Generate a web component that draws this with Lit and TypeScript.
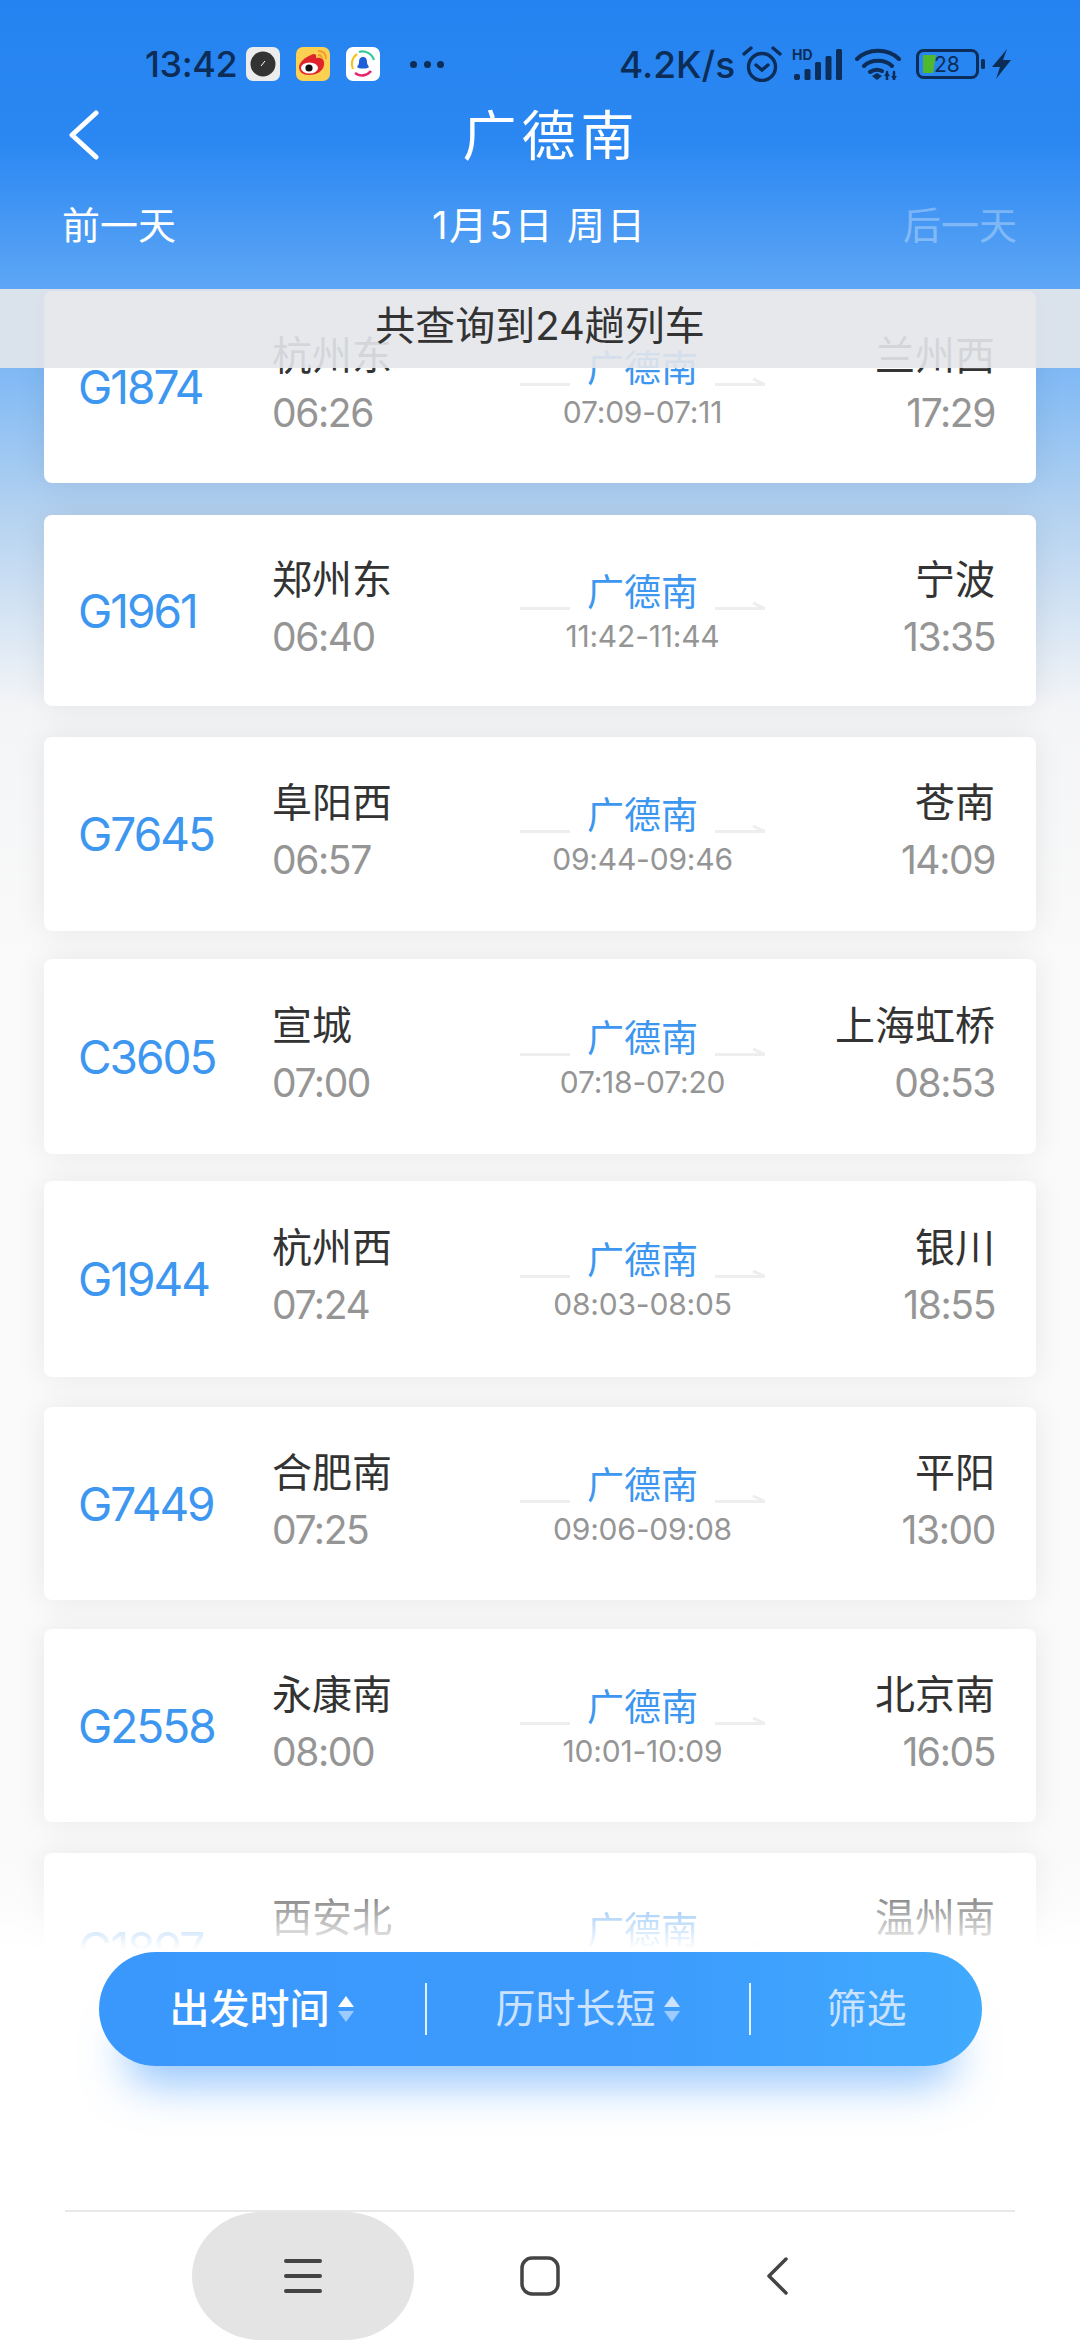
import { LitElement, html, css, svg } from 'lit';
import { customElement } from 'lit/decorators.js';

interface Train {
  no: string;
  from: string;
  dep: string;
  stop: string;
  to: string;
  arr: string;
  h: number;
  gap: number;
}

const TRAINS: Train[] = [
  { no: 'G1874', from: '杭州东', dep: '06:26', stop: '07:09-07:11', to: '兰州西', arr: '17:29', h: 192, gap: 32 },
  { no: 'G1961', from: '郑州东', dep: '06:40', stop: '11:42-11:44', to: '宁波', arr: '13:35', h: 191, gap: 31 },
  { no: 'G7645', from: '阜阳西', dep: '06:57', stop: '09:44-09:46', to: '苍南', arr: '14:09', h: 194, gap: 28 },
  { no: 'C3605', from: '宣城', dep: '07:00', stop: '07:18-07:20', to: '上海虹桥', arr: '08:53', h: 195, gap: 27 },
  { no: 'G1944', from: '杭州西', dep: '07:24', stop: '08:03-08:05', to: '银川', arr: '18:55', h: 196, gap: 30 },
  { no: 'G7449', from: '合肥南', dep: '07:25', stop: '09:06-09:08', to: '平阳', arr: '13:00', h: 193, gap: 29 },
  { no: 'G2558', from: '永康南', dep: '08:00', stop: '10:01-10:09', to: '北京南', arr: '16:05', h: 193, gap: 31 },
  { no: 'G1897', from: '西安北', dep: '08:12', stop: '12:20-12:22', to: '温州南', arr: '15:40', h: 192, gap: 0 },
];

const statusLeft = svg`
  <svg class="app" viewBox="0 0 34 34">
    <rect width="34" height="34" rx="7" fill="#ececec"/>
    <circle cx="17" cy="17" r="12.500" fill="#333"/>
    <path d="M15 19l4-5" stroke="#fff" stroke-width="1"/>
  </svg>
  <svg class="app" viewBox="0 0 34 34">
    <rect width="34" height="34" rx="7" fill="#fcd050"/>
    <path d="M15 8c3-2 6-1 5 3 5-1 9 1 8 7-1 7-9 10-15 10S3 25 3 20c0-4 6-10 12-12z" fill="#e0242b"/>
    <ellipse cx="13.500" cy="21" rx="8.500" ry="5.500" fill="#fff"/>
    <circle cx="13" cy="21" r="3.600" fill="#111"/>
    <path d="M22 4c5 0 8 3 8 8M22 8c2.500 0 4 1.500 4 4" fill="none" stroke="#f29a2e" stroke-width="1.800"/>
  </svg>
  <svg class="app" viewBox="0 0 34 34">
    <rect width="34" height="34" rx="7" fill="#fff"/>
    <path d="M7 22a12 12 0 0 1 4-15" fill="none" stroke="#f5c518" stroke-width="2.200"/>
    <path d="M13 5a12 12 0 0 1 15 8" fill="none" stroke="#35c79a" stroke-width="2.200"/>
    <path d="M9 26c5 4 12 3 16-2" fill="none" stroke="#e5266e" stroke-width="2.600"/>
    <path d="M17 10c3 0 4 2.500 4 5 0 2 1 3.500 2 5-2 2-10 2-12 0 1-1.500 2-3 2-5 0-2.500 1-5 4-5z" fill="#1e5fd8"/>
  </svg>
`;

const statusRight = svg`
  <svg class="alarm" viewBox="0 0 40 36" fill="none" stroke="#0c2d57" stroke-width="3.400" stroke-linecap="round">
    <circle cx="20" cy="21" r="13.500"/>
    <path d="M14 19l6 5 6-5M2 8l7-6M38 8l-7-6"/>
  </svg>
  <svg class="signal" viewBox="0 0 50 32" fill="#0c2d57">
    <text x="0" y="12" font-family="Inter, sans-serif" font-size="14" font-weight="700">HD</text>
    <rect x="2" y="26" width="6" height="6" rx="2"/>
    <rect x="12.500" y="21" width="6" height="11" rx="1.500"/>
    <rect x="23" y="14" width="6" height="18" rx="1.500"/>
    <rect x="33.500" y="8" width="6" height="24" rx="1.500"/>
    <rect x="44" y="1" width="6" height="31" rx="1.500"/>
  </svg>
  <svg class="wifi" viewBox="0 0 46 32" fill="none" stroke="#0c2d57" stroke-width="4" stroke-linecap="round">
    <path d="M2 11c11-11 31-11 42 0M9 18c7-7 21-7 28 0M15 24c3-2 8-3 12-1"/>
    <path d="M17 28l5-3 5 3-5 4z" fill="#0c2d57" stroke="none"/>
    <path d="M32 24v8M39 24v8" stroke-width="2.500"/>
    <path d="M29 28l3-4 3 4zM36 28l3 4 3-4z" fill="#0c2d57" stroke="none"/>
  </svg>
  <svg class="battery" viewBox="0 0 69 30">
    <rect x="1.500" y="1.500" width="60" height="27" rx="6" fill="none" stroke="#0c2d57" stroke-width="3"/>
    <path d="M7 6h13l-3 18H7z" fill="#4fb82e"/>
    <rect x="65" y="10" width="4" height="10" rx="1.500" fill="#0c2d57"/>
    <text x="18" y="23" font-family="Inter, sans-serif" font-size="21" fill="#0c2d57">28</text>
  </svg>
  <svg class="bolt" viewBox="0 0 19 30"><path d="M15 0L0 18h8l-4 12 15-19h-8z" fill="#0c2d57"/></svg>
`;

@customElement('app-root')
export class AppRoot extends LitElement {
  static styles = css`
    :host {
      display: block;
      position: relative;
      width: 1080px;
      height: 2340px;
      overflow: hidden;
      background: #fff;
      font-family: Inter, "Noto Sans CJK SC", sans-serif;
    }

    .page {
      display: flex;
      flex-direction: column;
      height: 100%;
    }

    /* header */
    .head {
      height: 289px;
      flex: none;
      box-sizing: border-box;
      background: linear-gradient(180deg, #2583f1 0%, #2b88f2 50%, #5ea6f5 100%);
      color: #fff;
    }

    .status {
      height: 34px;
      padding: 47px 0 0 145px;
      display: flex;
      align-items: center;
      color: #0c2d57;
    }

    .clock {
      font-size: 36px;
      font-weight: 500;
      width: 101px;
      letter-spacing: -0.4px;
    }

    .app {
      width: 34px;
      height: 34px;
      margin-right: 16px;
    }

    .dots {
      display: flex;
      gap: 6.5px;
      margin: 0 0 0 14px;
    }

    .dots i {
      width: 7px;
      height: 7px;
      border-radius: 50%;
      background: #0c2d57;
    }

    .speed {
      font-size: 37px;
      font-weight: 500;
      margin-left: 175px;
      width: 123px;
      white-space: nowrap;
    }

    .alarm { width: 40px; height: 36px; }
    .signal { width: 50px; height: 32px; margin-left: 10px; }
    .wifi { width: 46px; height: 32px; margin-left: 13px; }
    .battery { width: 69px; height: 30px; margin-left: 15px; }
    .bolt { width: 19px; height: 30px; margin-left: 7px; }

    .nav-row {
      position: relative;
      display: flex;
      justify-content: center;
      margin-top: 29px;
      height: 50px;
    }

    .back {
      position: absolute;
      left: 69px;
      top: 0;
      width: 30px;
      height: 50px;
    }

    .title {
      font-size: 54px;
      line-height: 54px;
      letter-spacing: 5px;
      margin-left: 22px;
    }

    .days {
      display: flex;
      justify-content: space-between;
      padding: 0 63px 0 62px;
      margin-top: 43px;
      font-size: 38px;
      line-height: 44px;
    }

    .days .next { opacity: 0.3; }
    .days .date { letter-spacing: 2px; }

    /* list */
    .main {
      position: relative;
      flex: 1;
      min-height: 0;
      overflow: hidden;
      background: linear-gradient(180deg, #7fb9f5 0, #7fb9f5 80px, #b4d2f0 225px, #f4f5f7 420px, #fafafa 700px);
    }

    .list {
      display: flex;
      flex-direction: column;
      padding: 2px 44px 0;
    }

    .card {
      box-sizing: border-box;
      display: grid;
      grid-template-columns: 194px 248px 245px 230px;
      align-items: center;
      padding: 0 41px 0 34px;
      background: #fff;
      border-radius: 8px;
      box-shadow: 0 0 30px rgba(0, 0, 0, 0.08);
      flex: none;
    }

    .no {
      font-size: 46px;
      letter-spacing: -2px;
      color: #3d97f0;
    }

    .side {
      display: flex;
      flex-direction: column;
      gap: 9px;
      margin-top: -5px;
    }

    .side.end { align-items: flex-end; }

    .station {
      font-size: 40px;
      line-height: 48px;
      color: #333;
    }

    .time {
      font-size: 39px;
      line-height: 48px;
      letter-spacing: -1.4px;
      color: #959595;
    }

    .mid {
      display: flex;
      flex-direction: column;
      align-items: center;
      margin-top: 2px;
    }

    .route {
      display: flex;
      align-items: flex-end;
      gap: 17px;
      width: 100%;
    }

    .route svg {
      flex: 1;
      height: 8px;
      margin-bottom: 6px;
    }

    .stop {
      font-size: 37px;
      line-height: 46px;
      color: #3d97f0;
    }

    .span {
      font-size: 30px;
      line-height: 36px;
      color: #959595;
      margin-top: 2px;
      letter-spacing: -0.2px;
    }

    /* overlays */
    .banner {
      position: absolute;
      left: 0;
      right: 0;
      top: 0;
      height: 79px;
      background: rgba(228, 230, 234, 0.91);
      text-align: center;
      font-size: 40px;
      line-height: 73px;
      color: #333;
    }

    .fade {
      position: absolute;
      left: 0;
      right: 0;
      bottom: 0;
      height: 90px;
      background: linear-gradient(180deg, rgba(255, 255, 255, 0) 0, #fff 100%);
    }

    .bar {
      position: absolute;
      left: 99px;
      bottom: 274px;
      width: 883px;
      height: 114px;
      border-radius: 57px;
      background: linear-gradient(90deg, #3a97fc 0%, #3d9bfd 60%, #40aafe 100%);
      box-shadow: 0 44px 44px -26px rgba(60, 150, 250, 0.55);
      display: grid;
      grid-template-columns: 326px 324px 233px;
      align-items: center;
      color: #cbe3ff;
      font-size: 40px;
    }

    .tab {
      display: flex;
      align-items: center;
      justify-content: center;
      gap: 7px;
      height: 52px;
      line-height: 52px;
      border-left: 2px solid rgba(255, 255, 255, 0.85);
    }

    .tab:first-child { border-left: none; }
    .tab.on { color: #fff; font-weight: 500; }

    .sort {
      width: 18px;
      height: 32px;
    }

    .spacer {
      flex: none;
      height: 260px;
      background: #fff;
    }

    .sysnav {
      flex: none;
      box-sizing: border-box;
      height: 130px;
      margin: 0 65px;
      border-top: 2px solid #e8e8e8;
      display: flex;
      padding-left: 127px;
      gap: 15px;
    }

    .key {
      width: 222px;
      display: flex;
      align-items: center;
      justify-content: center;
      color: #444;
    }

    .key.hot {
      background: #e4e4e4;
      border-radius: 70px / 65px;
    }

    .key svg { width: 40px; height: 40px; }
  `;

  private renderCard(t: Train) {
    return html`
      <div class="card" style="height:${t.h}px;margin-bottom:${t.gap}px">
        <div class="no">${t.no}</div>
        <div class="side">
          <div class="station">${t.from}</div>
          <div class="time">${t.dep}</div>
        </div>
        <div class="mid">
          <div class="route">
            <svg viewBox="0 0 50 8" preserveAspectRatio="none"><path d="M0 6.500h50" stroke="#eee" stroke-width="3"/></svg>
            <div class="stop">广德南</div>
            <svg viewBox="0 0 50 8" preserveAspectRatio="none"><path d="M0 6.500h50L38 1" fill="none" stroke="#eee" stroke-width="3"/></svg>
          </div>
          <div class="span">${t.stop}</div>
        </div>
        <div class="side end">
          <div class="station">${t.to}</div>
          <div class="time">${t.arr}</div>
        </div>
      </div>
    `;
  }

  private sortIcon(tint: string) {
    return html`<svg class="sort" viewBox="0 0 18 32">
      <path d="M9 3l8 11H1z" fill="${tint}"/>
      <path d="M9 29L1 18h16z" fill="#9ccbff"/>
    </svg>`;
  }

  render() {
    return html`
      <div class="page">
        <div class="head">
          <div class="status">
            <span class="clock">13:42</span>
            ${statusLeft}
            <span class="dots"><i></i><i></i><i></i></span>
            <span class="speed">4.2K/s</span>
            ${statusRight}
          </div>
          <div class="nav-row">
            <svg class="back" viewBox="0 0 30 50" fill="none" stroke="#fff" stroke-width="5" stroke-linecap="round" stroke-linejoin="round">
              <path d="M27 3L3 25l24 22"/>
            </svg>
            <div class="title">广德南</div>
          </div>
          <div class="days">
            <span>前一天</span>
            <span class="date">1月5日 周日</span>
            <span class="next">后一天</span>
          </div>
        </div>
        <div class="main">
          <div class="list">${TRAINS.map((t) => this.renderCard(t))}</div>
          <div class="banner">共查询到24趟列车</div>
          <div class="fade"></div>
        </div>
        <div class="spacer"></div>
        <div class="sysnav">
          <div class="key hot">
            <svg viewBox="0 0 40 40" stroke="#444" stroke-width="4" stroke-linecap="round">
              <path d="M3 5h34M3 20h34M3 35h34"/>
            </svg>
          </div>
          <div class="key">
            <svg viewBox="0 0 40 40" fill="none" stroke="#444" stroke-width="3.500">
              <rect x="2" y="2" width="36" height="36" rx="10"/>
            </svg>
          </div>
          <div class="key">
            <svg viewBox="0 0 40 40" fill="none" stroke="#444" stroke-width="3.500" stroke-linecap="round" stroke-linejoin="round">
              <path d="M29 3L12 20l17 17"/>
            </svg>
          </div>
        </div>
      </div>
      <div class="bar">
        <div class="tab on">出发时间${this.sortIcon('#fff')}</div>
        <div class="tab">历时长短${this.sortIcon('#cbe3ff')}</div>
        <div class="tab">筛选</div>
      </div>
    `;
  }
}
